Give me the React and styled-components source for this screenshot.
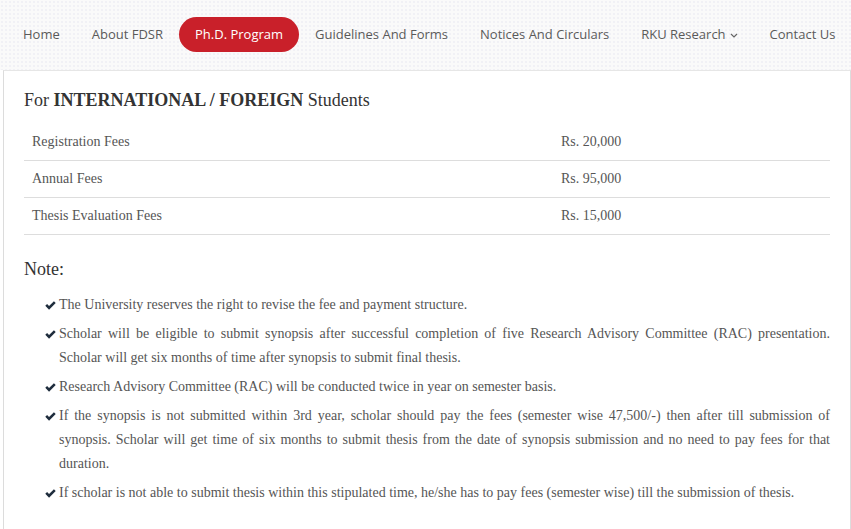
import React from 'react';
import styled, { createGlobalStyle } from 'styled-components';

const GlobalStyle = createGlobalStyle`
  body {
    margin: 0;
    background: #fff;
  }
`;

const navItems = [
  { label: 'Home' },
  { label: 'About FDSR' },
  { label: 'Ph.D. Program', active: true },
  { label: 'Guidelines And Forms' },
  { label: 'Notices And Circulars' },
  { label: 'RKU Research', dropdown: true },
  { label: 'Contact Us' },
];

const fees = [
  ['Registration Fees', 'Rs. 20,000'],
  ['Annual Fees', 'Rs. 95,000'],
  ['Thesis Evaluation Fees', 'Rs. 15,000'],
];

const notes = [
  'The University reserves the right to revise the fee and payment structure.',
  'Scholar will be eligible to submit synopsis after successful completion of five Research Advisory Committee (RAC) presentation. Scholar will get six months of time after synopsis to submit final thesis.',
  'Research Advisory Committee (RAC) will be conducted twice in year on semester basis.',
  'If the synopsis is not submitted within 3rd year, scholar should pay the fees (semester wise 47,500/-) then after till submission of synopsis. Scholar will get time of six months to submit thesis from the date of synopsis submission and no need to pay fees for that duration.',
  'If scholar is not able to submit thesis within this stipulated time, he/she has to pay fees (semester wise) till the submission of thesis.',
];

const Check = () => (
  <CheckIcon viewBox="0 0 12 10" aria-hidden="true">
    <path d="M0.2 5.4 L2.2 3.4 L4.4 5.6 L9.8 0.2 L11.8 2.2 L4.4 9.6 Z" fill="#1f2d3d" />
  </CheckIcon>
);

const Chevron = () => (
  <ChevronIcon viewBox="0 0 8 5" aria-hidden="true">
    <path d="M1 1 L4 4 L7 1" fill="none" stroke="#666" strokeWidth="1.2" />
  </ChevronIcon>
);

export default function App() {
  return (
    <>
      <GlobalStyle />
      <NavBar>
        {navItems.map(item => (
          <NavItem key={item.label} $active={item.active}>
            {item.label}
            {item.dropdown && <Chevron />}
          </NavItem>
        ))}
      </NavBar>
      <Panel>
        <Heading>
          For <strong>INTERNATIONAL / FOREIGN</strong> Students
        </Heading>
        <FeeTable>
          <tbody>
            {fees.map(([name, amount]) => (
              <tr key={name}>
                <NameCell>{name}</NameCell>
                <Cell>{amount}</Cell>
              </tr>
            ))}
          </tbody>
        </FeeTable>
        <NoteTitle>Note:</NoteTitle>
        <NoteList>
          {notes.map(text => (
            <NoteItem key={text}>
              <Check />
              <NoteText>{text}</NoteText>
            </NoteItem>
          ))}
        </NoteList>
      </Panel>
    </>
  );
}

const NavBar = styled.nav`
  box-sizing: border-box;
  height: 70px;
  display: flex;
  align-items: center;
  padding: 0 1px 2px 7px;
  background-color: #fafafa;
  background-image: radial-gradient(#f0f0f5 0.7px, transparent 0.8px);
  background-size: 4px 4px;
`;

const NavItem = styled.a`
  display: flex;
  align-items: center;
  height: 35px;
  padding: 0 16px;
  border-radius: 18px;
  font-family: "Open Sans", sans-serif;
  font-size: 13px;
  color: ${p => (p.$active ? '#fff' : '#5a5a5a')};
  background: ${p => (p.$active ? '#c9202a' : 'transparent')};
  white-space: nowrap;
  cursor: pointer;
`;

const ChevronIcon = styled.svg`
  width: 8px;
  height: 5px;
  margin-left: 4px;
  margin-top: 2px;
`;

const Panel = styled.main`
  margin-left: 3px;
  border-top: 1px solid #e6e6e6;
  border-left: 1px solid #dcdcdc;
  border-right: 1px solid #dcdcdc;
  padding: 17px 20px 30px;
  background: #fff;
  font-family: "Liberation Serif", "Times New Roman", serif;
  color: #555;
`;

const Heading = styled.h3`
  margin: 0 0 12px;
  font-size: 18px;
  font-weight: normal;
  line-height: 24px;
  color: #333;

  strong {
    font-weight: bold;
  }
`;

const FeeTable = styled.table`
  width: 100%;
  border-collapse: collapse;
  font-size: 14px;
`;

const Cell = styled.td`
  padding: 8px;
  line-height: 20px;
  border-bottom: 1px solid #ddd;
  color: #555;
`;

const NameCell = styled(Cell)`
  width: 513px;
`;

const NoteTitle = styled.h4`
  margin: 22px 0 12px;
  font-size: 18px;
  font-weight: normal;
  line-height: 24px;
  color: #333;
`;

const NoteList = styled.ul`
  list-style: none;
  margin: 0;
  padding: 0 0 0 21px;
`;

const NoteItem = styled.li`
  display: flex;
  align-items: flex-start;
  margin-bottom: 5px;
  font-size: 14px;
  line-height: 24px;
`;

const CheckIcon = styled.svg`
  flex: none;
  width: 11px;
  height: 9px;
  margin: 8px 3px 0 0;
`;

const NoteText = styled.span`
  flex: 1;
  text-align: justify;
  color: #555;
`;
